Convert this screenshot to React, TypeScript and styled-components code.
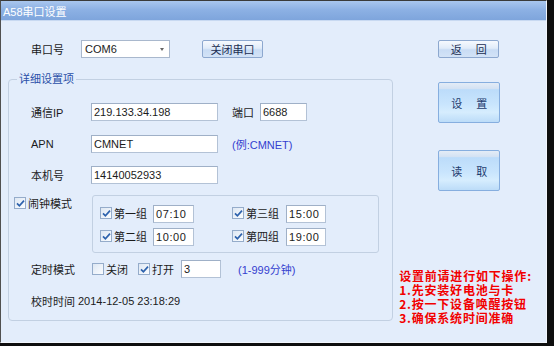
import React from "react";
import styled, { createGlobalStyle } from "styled-components";

const Global = createGlobalStyle`
  html, body { margin: 0; padding: 0; background: #0e0e0e; }
  body {
    width: 554px; height: 346px; overflow: hidden;
    font-family: "Liberation Sans", "Noto Sans CJK SC", sans-serif;
    font-size: 11px; color: #1b1b1b;
  }
  * { box-sizing: border-box; }
`;

const Window = styled.div`
  width: 547px;
  height: 343px;
  border-top: 1px solid #3a3a3a;
  border-left: 1px solid #505050;
  border-right: 1px solid #f2f6fc;
  border-bottom: 1px solid #f2f6fc;
  background: #e3edfb;
  display: flex;
  flex-direction: column;
`;

const TitleBar = styled.div`
  height: 20px;
  flex: none;
  display: flex;
  align-items: center;
  padding-left: 2px;
  background: linear-gradient(#a9c6ee, #8db1e4 45%, #7ea5dc);
  border-bottom: 1px solid #c8d9f1;
  color: #fff;
  font-size: 11px;
`;

const Body = styled.div`
  flex: 1;
  display: flex;
  padding: 19px 0 0 7px;
`;

const LeftCol = styled.div`
  width: 388px;
  display: flex;
  flex-direction: column;
`;

const TopRow = styled.div`
  height: 18px;
  display: flex;
  align-items: center;
  padding-left: 23px;
`;

const FieldLabel = styled.span<{ $w?: number; $ml?: number }>`
  flex: none;
  width: ${(p) => (p.$w ? `${p.$w}px` : "auto")};
  margin-left: ${(p) => p.$ml ?? 0}px;
  white-space: nowrap;
`;

const Combo = styled.div`
  width: 89px;
  height: 18px;
  background: #fff;
  border: 1px solid #a9b8cd;
  display: flex;
  align-items: center;
  justify-content: space-between;
  padding: 0 5px 0 3px;
`;

const Arrow = styled.span`
  width: 0;
  height: 0;
  border-left: 2.5px solid transparent;
  border-right: 2.5px solid transparent;
  border-top: 3px solid #666;
`;

const SmallButton = styled.div<{ $ml?: number; $gap?: number }>`
  flex: none;
  width: 61px;
  height: 18px;
  margin-left: ${(p) => p.$ml ?? 0}px;
  border: 1px solid #8da8cf;
  border-radius: 2px;
  background: linear-gradient(#f6f9fe, #e1ecf9 45%, #c9dcf4 55%, #d3e3f7);
  display: flex;
  align-items: center;
  justify-content: center;
  gap: ${(p) => p.$gap ?? 0}px;
  color: #1c2e52;
  white-space: nowrap;
`;

const Group = styled.fieldset`
  margin: 15px 0 0 0;
  padding: 0 0 0 5px;
  border: 1px solid #c2d0e2;
  border-radius: 4px;
  height: 248px;
  min-width: 0;
`;

const Legend = styled.legend`
  margin-left: 3px;
  padding: 0 2px;
  line-height: 13px;
  color: #2a4fa8;
`;

const Row = styled.div<{ $mt: number }>`
  display: flex;
  align-items: center;
  min-height: 18px;
  margin-top: ${(p) => p.$mt}px;
`;

const TextInput = styled.div<{ $w: number; $ml?: number; $mono?: boolean }>`
  flex: none;
  width: ${(p) => p.$w}px;
  height: 18px;
  margin-left: ${(p) => p.$ml ?? 0}px;
  background: #fff;
  border: 1px solid #b3c2d6;
  border-top-color: #9fb0c7;
  border-left-color: #9fb0c7;
  display: flex;
  align-items: center;
  padding-left: 2px;
  letter-spacing: ${(p) => (p.$mono ? "0.6px" : "0")};
`;

const Hint = styled.span<{ $ml: number }>`
  margin-left: ${(p) => p.$ml}px;
  color: #3440cf;
  white-space: nowrap;
`;

const CheckWrap = styled.label<{ $w?: number; $ml?: number }>`
  flex: none;
  display: flex;
  align-items: center;
  gap: 2px;
  width: ${(p) => (p.$w ? `${p.$w}px` : "auto")};
  margin-left: ${(p) => p.$ml ?? 0}px;
  white-space: nowrap;
  align-self: ${(p) => (p.$w ? "flex-start" : "center")};
`;

const Box = styled.span`
  width: 12px;
  height: 12px;
  flex: none;
  border: 1px solid #95acca;
  background: linear-gradient(135deg, #dde7f3, #fbfdff);
  display: flex;
  align-items: center;
  justify-content: center;
`;

const Check = ({ on }: { on: boolean }) => (
  <Box>
    {on && (
      <svg width="9" height="9" viewBox="0 0 9 9">
        <path d="M1 4.3 L3.4 6.8 L8 1.6" fill="none" stroke="#2d62ad" strokeWidth="1.7" />
      </svg>
    )}
  </Box>
);

const AlarmBox = styled.div`
  width: 287px;
  height: 58px;
  border: 1px solid #c2d0e2;
  border-radius: 3px;
  padding: 9px 0 0 7px;
  display: grid;
  grid-template-columns: 132px 94px;
  grid-auto-rows: 18px;
  row-gap: 5px;
`;

const AlarmItem = styled.div`
  display: flex;
  align-items: center;
`;

const RightCol = styled.div`
  width: 151px;
  margin-left: 3px;
  display: flex;
  flex-direction: column;
`;

const ButtonStack = styled.div`
  display: flex;
  flex-direction: column;
  align-items: flex-start;
  padding-left: 42px;
`;

const BigButton = styled.div<{ $mt: number }>`
  width: 62px;
  height: 41px;
  margin-top: ${(p) => p.$mt}px;
  border: 1px solid #86aedf;
  border-radius: 2px;
  background: linear-gradient(
    #e4ecf6 0,
    #d3e2f3 15%,
    #bcdcfa 17%,
    #c9e5fd 55%,
    #d6edfe 75%,
    #bcdcf8 100%
  );
  display: flex;
  align-items: center;
  justify-content: center;
  gap: 14px;
  color: #1d3a6d;
  font-size: 11px;
  white-space: nowrap;
`;

const Note = styled.div`
  margin-top: auto;
  margin-bottom: 17px;
  margin-left: 3px;
  display: flex;
  flex-direction: column;
  color: #f20000;
  font-family: "Noto Sans CJK SC", sans-serif;
  font-weight: 700;
  font-size: 12px;
  letter-spacing: 0.8px;
  white-space: nowrap;
`;

const NoteLine = styled.div`
  height: 14px;
  line-height: 14px;
`;

const Spaced = ({ text }: { text: string }) => (
  <>
    {text.split("").map((c, i) => (
      <span key={i}>{c}</span>
    ))}
  </>
);

const noteLines = [
  "设置前请进行如下操作:",
  "1.先安装好电池与卡",
  "2.按一下设备唤醒按钮",
  "3.确保系统时间准确",
];

export default function App() {
  return (
    <>
      <Global />
      <Window>
        <TitleBar>A58串口设置</TitleBar>
        <Body>
          <LeftCol>
            <TopRow>
              <FieldLabel $w={50}>串口号</FieldLabel>
              <Combo>
                <span>COM6</span>
                <Arrow />
              </Combo>
              <SmallButton $ml={32}>关闭串口</SmallButton>
            </TopRow>
            <Group>
              <Legend>详细设置项</Legend>
              <Row $mt={17}>
                <FieldLabel $w={60} $ml={17}>通信IP</FieldLabel>
                <TextInput $w={127}>219.133.34.198</TextInput>
                <FieldLabel $ml={14}>端口</FieldLabel>
                <TextInput $w={47} $ml={6}>6688</TextInput>
              </Row>
              <Row $mt={14}>
                <FieldLabel $w={60} $ml={17}>APN</FieldLabel>
                <TextInput $w={127}>CMNET</TextInput>
                <Hint $ml={14}>(例:CMNET)</Hint>
              </Row>
              <Row $mt={13}>
                <FieldLabel $w={60} $ml={17}>本机号</FieldLabel>
                <TextInput $w={127}>14140052933</TextInput>
              </Row>
              <Row $mt={11}>
                <CheckWrap $w={78}>
                  <Check on />
                  闹钟模式
                </CheckWrap>
                <AlarmBox>
                  <AlarmItem>
                    <CheckWrap $w={53}>
                      <Check on />
                      第一组
                    </CheckWrap>
                    <TextInput $w={41} $mono>07:10</TextInput>
                  </AlarmItem>
                  <AlarmItem>
                    <CheckWrap $w={54}>
                      <Check on />
                      第三组
                    </CheckWrap>
                    <TextInput $w={40} $mono>15:00</TextInput>
                  </AlarmItem>
                  <AlarmItem>
                    <CheckWrap $w={53}>
                      <Check on />
                      第二组
                    </CheckWrap>
                    <TextInput $w={41} $mono>10:00</TextInput>
                  </AlarmItem>
                  <AlarmItem>
                    <CheckWrap $w={54}>
                      <Check on />
                      第四组
                    </CheckWrap>
                    <TextInput $w={40} $mono>19:00</TextInput>
                  </AlarmItem>
                </AlarmBox>
              </Row>
              <Row $mt={7}>
                <FieldLabel $w={61} $ml={17}>定时模式</FieldLabel>
                <CheckWrap>
                  <Check on={false} />
                  关闭
                </CheckWrap>
                <CheckWrap $ml={10}>
                  <Check on />
                  打开
                </CheckWrap>
                <TextInput $w={40} $ml={7}>3</TextInput>
                <Hint $ml={17}>(1-999分钟)</Hint>
              </Row>
              <Row $mt={14}>
                <FieldLabel $ml={17}>校时时间</FieldLabel>
                <FieldLabel $ml={3}>2014-12-05 23:18:29</FieldLabel>
              </Row>
            </Group>
          </LeftCol>
          <RightCol>
            <ButtonStack>
              <SmallButton $gap={14}>
                <Spaced text="返回" />
              </SmallButton>
              <BigButton $mt={24}>
                <Spaced text="设置" />
              </BigButton>
              <BigButton $mt={27}>
                <Spaced text="读取" />
              </BigButton>
            </ButtonStack>
            <Note>
              {noteLines.map((l) => (
                <NoteLine key={l}>{l}</NoteLine>
              ))}
            </Note>
          </RightCol>
        </Body>
      </Window>
    </>
  );
}
